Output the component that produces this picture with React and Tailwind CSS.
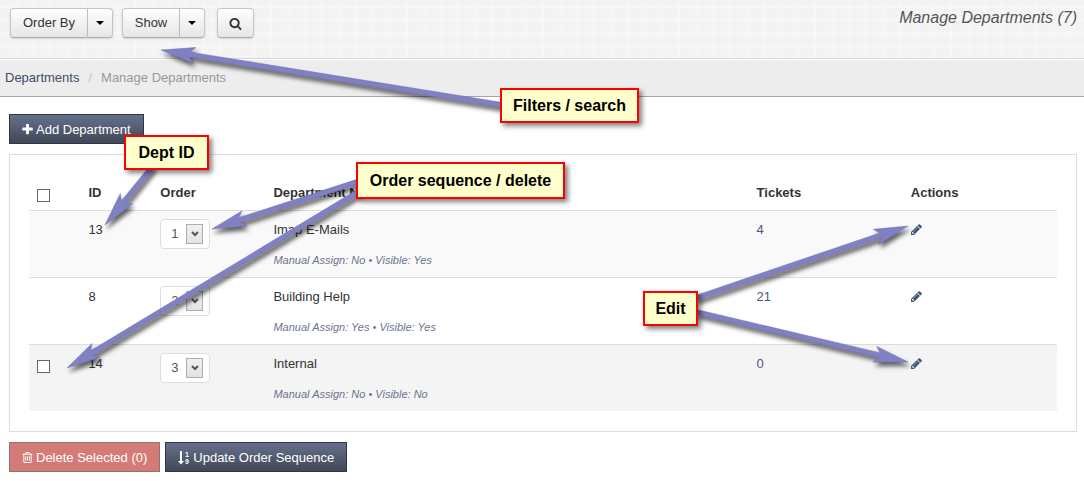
import React from "react";

const ICONS = {
  search:
    "M1216 832q0-185-131.5-316.5t-316.5-131.5-316.5 131.5-131.5 316.5 131.5 316.5 316.5 131.5 316.5-131.5 131.5-316.5zm512 832q0 52-38 90t-90 38q-54 0-90-38l-343-342q-179 124-399 124-143 0-273.5-55.5t-225-150-150-225-55.5-273.5 55.5-273.5 150-225 225-150 273.5-55.5 273.5 55.5 225 150 150 225 55.5 273.5q0 220-124 399l343 343q37 37 37 90z",
  plus: "M1600 736v192q0 40-28 68t-68 28h-416v416q0 40-28 68t-68 28h-192q-40 0-68-28t-28-68v-416h-416q-40 0-68-28t-28-68v-192q0-40 28-68t68-28h416v-416q0-40 28-68t68-28h192q40 0 68 28t28 68v416h416q40 0 68 28t28 68z",
  pencil:
    "M491 1536l91-91-235-235-91 91v107h128v128h107zm523-928q0-22-22-22-10 0-17 7l-542 542q-7 7-7 17 0 22 22 22 10 0 17-7l542-542q7-7 7-17zm-54-192l416 416-832 832h-416v-416zm683 96q0 53-37 90l-166 166-416-416 166-165q36-38 90-38 53 0 91 38l235 234q37 39 37 91z",
  trash:
    "M704 736v576q0 14-9 23t-23 9h-64q-14 0-23-9t-9-23v-576q0-14 9-23t23-9h64q14 0 23 9t9 23zm256 0v576q0 14-9 23t-23 9h-64q-14 0-23-9t-9-23v-576q0-14 9-23t23-9h64q14 0 23 9t9 23zm256 0v576q0 14-9 23t-23 9h-64q-14 0-23-9t-9-23v-576q0-14 9-23t23-9h64q14 0 23 9t9 23zm128 724v-948h-896v948q0 22 7 40.5t14.5 27 10.5 8.5h832q3 0 10.5-8.5t14.5-27 7-40.5zm-672-1076h448l-48-117q-7-9-17-11h-317q-10 2-17 11zm928 32v64q0 14-9 23t-23 9h-96v948q0 83-47 143.5t-113 60.5h-832q-66 0-113-58.5t-47-141.5v-952h-96q-14 0-23-9t-9-23v-64q0-14 9-23t23-9h309l70-167q15-37 54-63t79-26h320q40 0 79 26t54 63l70 167h309q14 0 23 9t9 23z",
};

function Icon({ name, className, viewBox = "0 0 1792 1792" }) {
  return (
    <svg viewBox={viewBox} fill="currentColor" aria-hidden="true" className={className}>
      <path d={ICONS[name]} />
    </svg>
  );
}

function SortNumericIcon() {
  return (
    <svg viewBox="0 0 12 14" fill="currentColor" aria-hidden="true" className="h-3.5 w-3">
      <path d="M2 0h2v10h2l-3 3.5L0 10h2z" />
      <text x="7" y="6" fontSize="7" fontWeight="bold">1</text>
      <text x="7" y="13" fontSize="7" fontWeight="bold">9</text>
    </svg>
  );
}

const LIGHT = "flex h-[30px] items-center justify-center border border-[#c5c5c5] border-b-[#aaaaaa] bg-linear-to-b from-white to-[#e6e6e6] text-[#333333] shadow-sm";
const DARK = "flex h-[30px] items-center gap-[3px] border border-[#2f3747] bg-linear-to-b from-[#65708c] to-[#414957] px-3 pt-px text-white";

function SplitButton({ label, width }) {
  return (
    <div className="flex">
      <button type="button" className={`${LIGHT} ${width} rounded-l`}>{label}</button>
      <button type="button" aria-label={`${label} options`} className={`${LIGHT} w-[25px] rounded-r border-l-0`}>
        <svg viewBox="0 0 8 4" className="h-1 w-2" aria-hidden="true">
          <path d="M0 0h8L4 4z" fill="#000" />
        </svg>
      </button>
    </div>
  );
}

const ROWS = [
  { id: 13, order: 1, name: "Imap E-Mails", assign: "No", visible: "Yes", tickets: 4, bg: "bg-[#f9f9f9]" },
  { id: 8, order: 2, name: "Building Help", assign: "Yes", visible: "Yes", tickets: 21, bg: "bg-white" },
  { id: 14, order: 3, name: "Internal", assign: "No", visible: "No", tickets: 0, bg: "bg-[#f4f4f4]", removable: true },
];

function OrderSelect({ id, value }) {
  return (
    <div className="relative h-[30px] w-[50px]">
      <select
        aria-label={`Order of department ${id}`}
        defaultValue={value}
        className="h-full w-full appearance-none rounded border border-[#dddddd] bg-white pl-2.5 text-[#555555]"
      >
        {ROWS.map((r) => (
          <option key={r.order} value={r.order}>{r.order}</option>
        ))}
      </select>
      <span className="pointer-events-none absolute top-[5px] right-[7px] flex h-5 w-[17px] items-center justify-center border border-[#acacac] bg-linear-to-b from-[#f0f0f0] to-[#e3e3e3]">
        <svg viewBox="0 0 8 6" className="h-1.5 w-2" aria-hidden="true">
          <path d="M1 1l3 3 3-3" fill="none" stroke="#555" strokeWidth="2" />
        </svg>
      </span>
    </div>
  );
}

const BOX = "block size-[13px] appearance-none border border-[#666666] bg-white";
const CELL = "px-2 pt-[9px] pb-[7px]";

const ARROWS = [
  { tail: [502, 105], tip: [161, 50] },
  { tail: [153, 166], tip: [105, 225] },
  { tail: [360, 181], tip: [212, 229] },
  { tail: [360, 191], tip: [67, 368] },
  { tail: [696, 298], tip: [908, 226] },
  { tail: [696, 312], tip: [908, 362] },
];

// Outline of an arrow with swept-back barbs, from the tail to the tip.
function arrowPoints({ tail, tip }) {
  const dx = tip[0] - tail[0];
  const dy = tip[1] - tail[1];
  const len = Math.hypot(dx, dy);
  const ux = dx / len;
  const uy = dy / len;
  const at = (back, side) => `${tip[0] - ux * back - uy * side},${tip[1] - uy * back + ux * side}`;
  return [at(len, 2.5), at(29, 2.5), at(34, 8), at(0, 0), at(34, -8), at(29, -2.5), at(len, -2.5)].join(" ");
}

const CALLOUTS = [
  { text: "Filters / search", box: "left-[500px] top-[88px] h-[35px] w-[139px]" },
  { text: "Dept ID", box: "left-[124px] top-[135px] h-[35px] w-[85px]" },
  { text: "Order sequence / delete", box: "left-[356px] top-[162px] h-[37px] w-[209px]" },
  { text: "Edit", box: "left-[643px] top-[291px] h-[35px] w-[55px]" },
];

export default function App() {
  return (
    <div className="relative overflow-hidden bg-white pb-2 font-['Liberation_Sans',Arial,sans-serif] text-[13px] leading-5 text-[#333333]">
      <header className="flex h-[59px] items-start justify-between border-b border-[#d6d6d6] bg-[#f4f4f4] bg-[repeating-linear-gradient(0deg,#0000_0_3px,#00000003_3px_4px,#0000_4px_11px,#ffffff40_11px_13px),repeating-linear-gradient(90deg,#0000_0_4px,#00000003_4px_5px,#0000_5px_15px,#ffffff40_15px_17px)] pr-[7px] pl-[10px]">
        <div className="flex pt-2">
          <SplitButton label="Order By" width="w-[78px]" />
          <div className="ml-[9px]"><SplitButton label="Show" width="w-[58px]" /></div>
          <button type="button" aria-label="Search" className={`${LIGHT} ml-3 w-[37px] rounded`}>
            <Icon name="search" className="size-[13px]" />
          </button>
        </div>
        <h1 className="pt-2 text-base leading-5 text-[#555555] italic">Manage Departments (7)</h1>
      </header>

      <nav aria-label="Breadcrumb" className="flex h-[38px] items-center gap-[9px] border-t border-b border-t-white border-b-[#a5a5a5] bg-[#ededed] px-[5px]">
        <a href="#departments" className="text-[#3f4c6b]">Departments</a>
        <span className="text-[#c4c4c4]">/</span>
        <span className="text-[#999999]">Manage Departments</span>
      </nav>

      <main className="flex flex-col items-start gap-2.5 pt-[17px] pr-[7px] pl-[9px]">
        <button type="button" className={DARK}>
          <Icon name="plus" viewBox="160 160 1472 1472" className="size-[11px]" />
          Add Department
        </button>

        <section className="w-full border border-[#dddddd] px-[19px] pt-[19px] pb-5">
          <table className="w-full table-fixed border-collapse text-left">
            <colgroup>
              <col className="w-[5%]" />
              <col className="w-[7%]" />
              <col className="w-[11%]" />
              <col className="w-[47%]" />
              <col className="w-[15%]" />
              <col className="w-[15%]" />
            </colgroup>
            <thead>
              <tr className="h-9">
                <th className="px-2 pt-1.5"><input type="checkbox" aria-label="Select all" className={BOX} /></th>
                <th className={CELL}>ID</th>
                <th className={CELL}>Order</th>
                <th className={CELL}>Department Name</th>
                <th className={CELL}>Tickets</th>
                <th className={CELL}>Actions</th>
              </tr>
            </thead>
            <tbody>
              {ROWS.map((r) => (
                <tr key={r.id} className={`border-t border-[#dddddd] align-top ${r.bg}`}>
                  <td className="px-2 pt-[15px]">
                    {r.removable && <input type="checkbox" aria-label={`Select ${r.name}`} className={BOX} />}
                  </td>
                  <td className={CELL}>{r.id}</td>
                  <td className="p-2"><OrderSelect id={r.id} value={r.order} /></td>
                  <td className={CELL}>
                    {r.name}
                    <p className="mt-2.5 text-[11px] leading-5 text-[#6b7590] italic">
                      Manual Assign: {r.assign} • Visible: {r.visible}
                    </p>
                  </td>
                  <td className={CELL}><a href="#tickets" className="text-[#4a587c]">{r.tickets}</a></td>
                  <td className="p-2">
                    <a href="#edit" aria-label={`Edit ${r.name}`} className="flex h-5 w-3 items-center text-[#3f5577]">
                      <Icon name="pencil" viewBox="128 128 1536 1536" className="size-[11px] shrink-0" />
                    </a>
                  </td>
                </tr>
              ))}
            </tbody>
          </table>
        </section>

        <div className="flex gap-[5px]">
          <button type="button" disabled className="flex h-[30px] items-center gap-[3px] border border-[#8a7474] bg-[#d57b77] px-3 pt-px text-white">
            <Icon name="trash" viewBox="128 128 1536 1536" className="size-[11px]" />
            Delete Selected (0)
          </button>
          <button type="button" className={DARK}>
            <SortNumericIcon />
            Update Order Sequence
          </button>
        </div>
      </main>

      <svg width="1084" height="481" viewBox="0 0 1084 481" aria-hidden="true" className="pointer-events-none absolute top-0 left-0 drop-shadow-[2px_4px_2px_#00000099]">
        {ARROWS.map((a) => (
          <polygon key={a.tip.join()} points={arrowPoints(a)} fill="#8080c4" stroke="#7070a8" strokeWidth="0.5" />
        ))}
      </svg>
      {CALLOUTS.map((c) => (
        <div key={c.text} className={`absolute flex items-center justify-center border-2 border-[#ff0000] bg-[#ffffcc] text-base font-bold whitespace-nowrap text-black shadow-[3px_3px_5px_#00000080] ${c.box}`}>
          {c.text}
        </div>
      ))}
    </div>
  );
}
